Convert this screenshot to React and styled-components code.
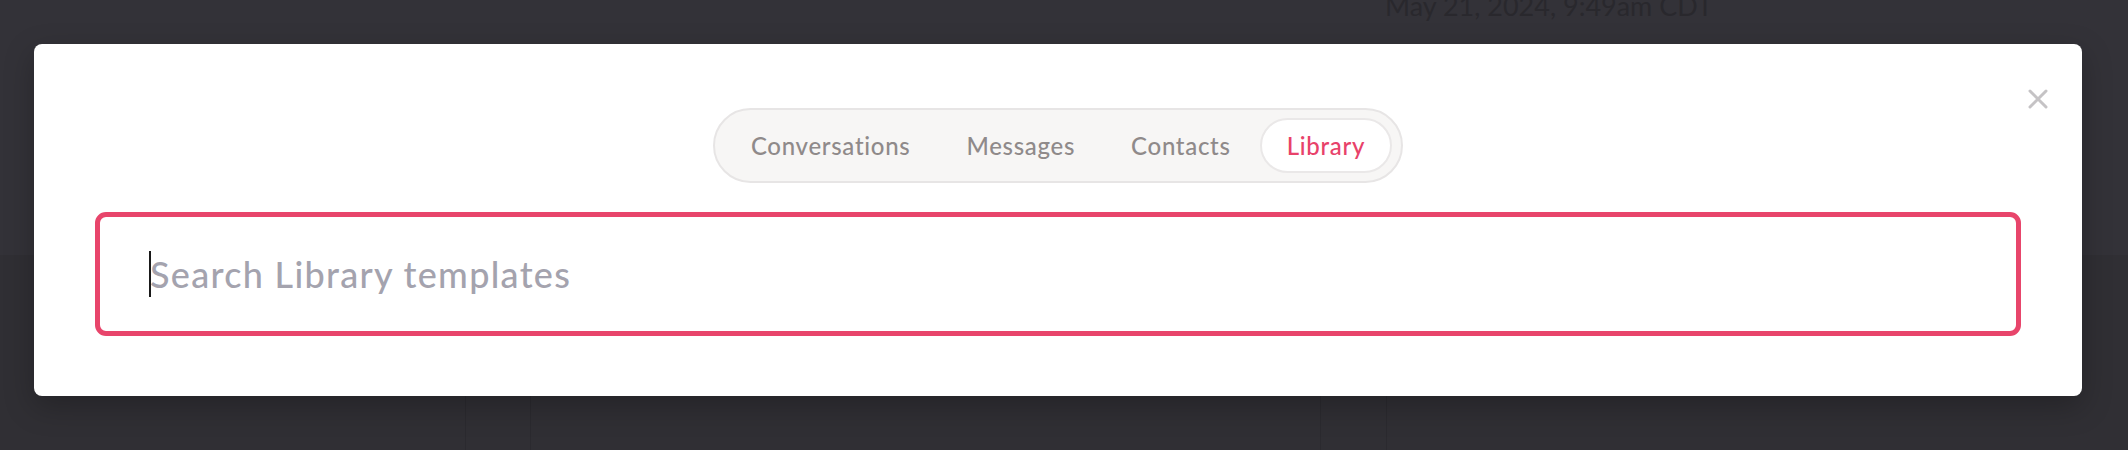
import React, { useState } from "react";
import styled, { createGlobalStyle } from "styled-components";

const GlobalStyle = createGlobalStyle`
  html, body {
    margin: 0;
    padding: 0;
    background: #323137;
    font-family: Lato, "Noto Sans", sans-serif;
  }
  #root {
    height: 450px;
  }
`;

const tabs = ["Conversations", "Messages", "Contacts", "Library"];

function CloseIcon() {
  return (
    <svg width="20" height="20" viewBox="0 0 20 20" fill="none">
      <path
        d="M2 2L18 18M18 2L2 18"
        stroke="#c5c3c5"
        strokeWidth="3"
        strokeLinecap="round"
      />
    </svg>
  );
}

export default function App() {
  const [active, setActive] = useState("Library");
  return (
    <Page>
      <GlobalStyle />
      <Backdrop>
        <DateLine>May 21, 2024, 9:49am CDT</DateLine>
        <Columns>
          <Column $w={465} />
          <Column $w={64} />
          <Column $w={789} />
          <Column $w={65} />
          <Column $w={745} $last />
        </Columns>
      </Backdrop>
      <Overlay>
        <Modal>
          <CloseButton aria-label="Close">
            <CloseIcon />
          </CloseButton>
          <TabBar>
            {tabs.map((t) => (
              <Tab key={t} $active={t === active} onClick={() => setActive(t)}>
                {t}
              </Tab>
            ))}
          </TabBar>
          <SearchWrap>
            <Caret />
            <SearchInput placeholder={`Search ${active} templates`} />
          </SearchWrap>
        </Modal>
      </Overlay>
    </Page>
  );
}

const Page = styled.div`
  position: relative;
  width: 2128px;
  height: 450px;
  overflow: hidden;
  background: #333238;
`;

const Backdrop = styled.div`
  display: flex;
  flex-direction: column;
  height: 100%;
`;

const DateLine = styled.div`
  margin: -11px 0 0 1385px;
  font-size: 27px;
  line-height: 34px;
  color: #29282d;
  white-space: nowrap;
`;

const Columns = styled.div`
  display: flex;
  flex: 1;
  margin-top: 232px;
  background: #302f34;
`;

const Column = styled.div`
  width: ${(p) => p.$w}px;
  flex: ${(p) => (p.$last ? 1 : "none")};
  border-right: ${(p) => (p.$last ? "none" : "1px solid #2b2a2f")};
`;

const Overlay = styled.div`
  position: absolute;
  inset: 0;
  display: flex;
  align-items: flex-start;
  padding: 44px 0 0 34px;
`;

const Modal = styled.div`
  position: relative;
  box-sizing: border-box;
  width: 2048px;
  height: 352px;
  background: #ffffff;
  border-radius: 8px;
  padding: 64px 61px 60px;
  display: flex;
  flex-direction: column;
  align-items: center;
  gap: 29px;
  box-shadow: 0 10px 30px rgba(0, 0, 0, 0.25);
`;

const CloseButton = styled.button`
  position: absolute;
  top: 45px;
  right: 34px;
  width: 20px;
  height: 20px;
  padding: 0;
  border: none;
  background: none;
  display: flex;
  cursor: pointer;
`;

const TabBar = styled.div`
  display: flex;
  align-items: center;
  gap: 2px;
  box-sizing: border-box;
  height: 75px;
  padding: 8px 9px;
  border: 2px solid #e7e5e5;
  border-radius: 999px;
  background: #f7f6f5;
`;

const Tab = styled.button`
  box-sizing: border-box;
  height: 55px;
  padding: 0 25px;
  border-radius: 999px;
  border: 2px solid ${(p) => (p.$active ? "#eae8e8" : "transparent")};
  background: ${(p) => (p.$active ? "#ffffff" : "transparent")};
  color: ${(p) => (p.$active ? "#e8426a" : "#8f8a8a")};
  font-family: Lato, "Noto Sans", sans-serif;
  font-size: 24px;
  font-weight: 500;
  letter-spacing: 0.7px;
  cursor: pointer;
`;

const SearchWrap = styled.div`
  position: relative;
  width: 100%;
`;

const Caret = styled.span`
  position: absolute;
  left: 54px;
  top: 39px;
  width: 2px;
  height: 46px;
  background: #1a1a1a;
`;

const SearchInput = styled.input`
  box-sizing: border-box;
  width: 100%;
  height: 124px;
  padding: 0 50px;
  border: 5px solid #e8456b;
  border-radius: 11px;
  outline: none;
  font-family: Lato, "Noto Sans", sans-serif;
  font-size: 36px;
  font-weight: 500;
  letter-spacing: 1.3px;
  color: #333;
  caret-color: transparent;

  &::placeholder {
    color: #a4a3ae;
  }
`;
